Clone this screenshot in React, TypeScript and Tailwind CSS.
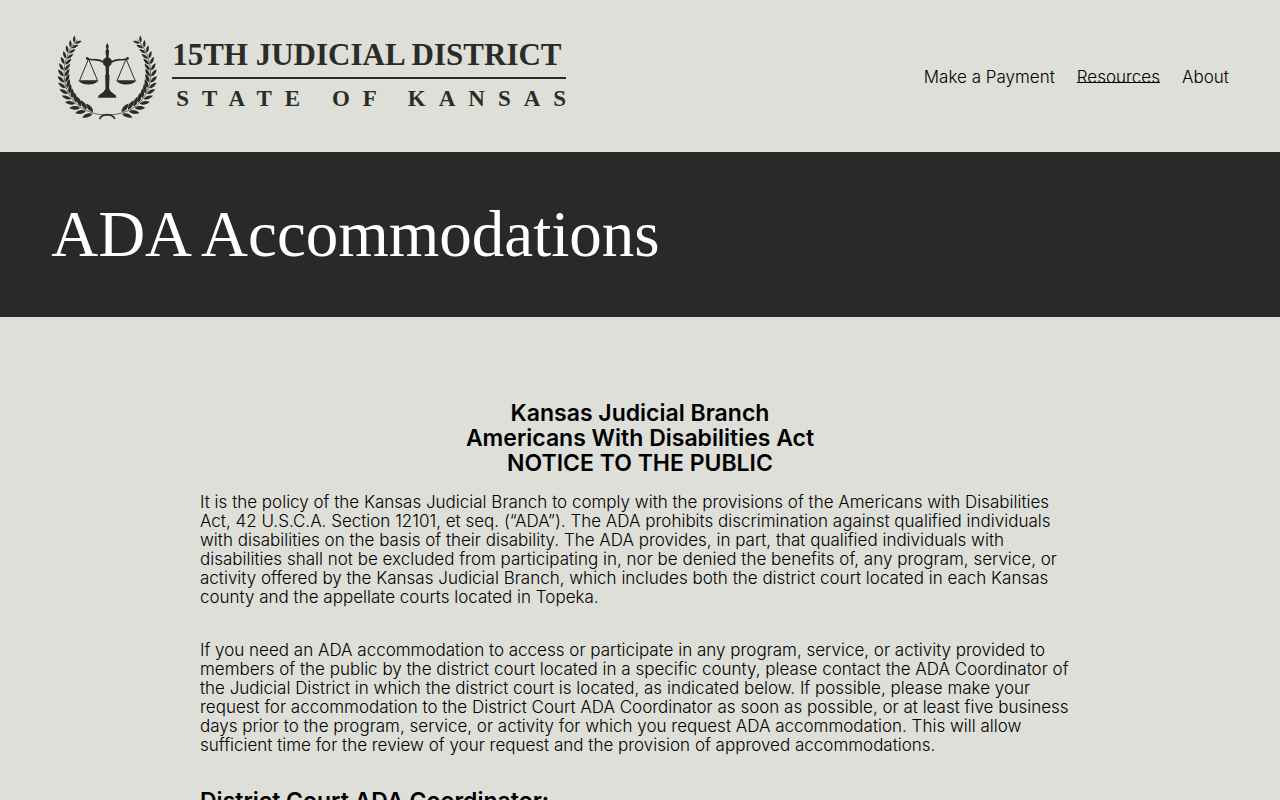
const navLinks = [
  { label: "Make a Payment", href: "#payment", active: false },
  { label: "Resources", href: "#resources", active: true },
  { label: "About", href: "#about", active: false },
];

// Stem of the left laurel branch, bottom to top
const stem = [
  [196, 287],
  [52, 280],
  [44, 128],
  [110, 60],
];

function stemPoint(t: number) {
  const u = 1 - t;
  const at = (i: number) =>
    u * u * u * stem[0][i] + 3 * u * u * t * stem[1][i] + 3 * u * t * t * stem[2][i] + t * t * t * stem[3][i];
  const slope = (i: number) =>
    3 * u * u * (stem[1][i] - stem[0][i]) + 6 * u * t * (stem[2][i] - stem[1][i]) + 3 * t * t * (stem[3][i] - stem[2][i]);
  return { x: at(0), y: at(1), angle: (Math.atan2(slope(1), slope(0)) * 180) / Math.PI };
}

const leaves = Array.from({ length: 15 }, (_, i) => ({ ...stemPoint(0.1 + i * 0.061), size: 1.25 - i * 0.032 }));

function Branch() {
  return (
    <g>
      <path d="M196 287C52 280 44 128 110 60" fill="none" stroke="currentColor" strokeWidth="2" />
      {leaves.map((leaf, i) => (
        <g key={i} transform={`translate(${leaf.x} ${leaf.y}) rotate(${leaf.angle}) scale(${leaf.size})`}>
          <path d="M1 -2C6-9 16-11 27-7C20 1 9 3 1-2Z" transform="rotate(-24)" />
          <path d="M1 2C6 9 16 11 27 7C20-1 9-3 1 2Z" transform="rotate(24)" />
        </g>
      ))}
    </g>
  );
}

function Emblem() {
  return (
    <svg viewBox="50 40 302 265" className="h-[88px] w-[101px] shrink-0" fill="currentColor" aria-hidden="true">
      <Branch />
      <g transform="translate(401 0) scale(-1 1)">
        <Branch />
      </g>
      <path d="M177 299Q183 287 200 286Q218 287 223 299M186 287H216" fill="none" stroke="currentColor" strokeWidth="5" />

      {/* Scales */}
      <path d="M200 69L205 80L203 88L206 94L204 113L213 120V134L206 141L205 163L207 169L206 208L211 216L227 229V235H173V229L190 216L195 208L194 169L196 163L195 141L188 134V120L197 113L195 94L198 88L196 80Z" />
      <path
        d="M138 117Q149 122 163 120Q179 121 190 128Q201 133 211 128Q223 120 238 120Q252 122 263 117"
        fill="none"
        stroke="currentColor"
        strokeWidth="5"
      />
      <circle cx="140" cy="116" r="4" />
      <circle cx="261" cy="116" r="4" />
      <path d="M144 118L117 183M144 118L171 183M257 118L230 183M257 118L284 183" fill="none" stroke="currentColor" strokeWidth="3" />
      <path d="M113 182H174Q165 195 144 195Q122 195 113 182ZM227 182H288Q279 195 257 195Q236 195 227 182Z" />
    </svg>
  );
}

function Logo() {
  return (
    <a href="#home" className="flex items-start gap-[14px] pl-[6px] text-[#2b2c27]">
      <Emblem />
      <span className="flex flex-col pt-1 font-['Liberation_Serif',serif] font-bold whitespace-nowrap">
        <span className="text-[31px] leading-9">15TH JUDICIAL DISTRICT</span>
        <span className="mt-1 h-[2px] bg-current" />
        <span className="-mr-[13px] mt-2 pl-1 text-[23px] leading-6 tracking-[13px]">STATE OF KANSAS</span>
      </span>
    </a>
  );
}

export default function App() {
  return (
    <div className="min-h-screen bg-[#dedfd9] font-['Inter',sans-serif] text-black">
      <header className="flex flex-wrap items-center justify-between gap-6 px-[4vw] pt-[33px] pb-[31px]">
        <Logo />
        <nav className="flex gap-[22px]">
          {navLinks.map((link) => (
            <a
              key={link.label}
              href={link.href}
              className={
                link.active
                  ? "text-[17px] leading-6 font-light underline decoration-1 underline-offset-[-1px] [text-decoration-skip-ink:none]"
                  : "text-[17px] leading-6 font-light"
              }
            >
              {link.label}
            </a>
          ))}
        </nav>
      </header>

      <section className="bg-[#2b2829] px-[4vw] py-12">
        <h1 className="font-['Liberation_Serif',serif] text-[65px] leading-[69px] text-white">ADA Accommodations</h1>
      </section>

      <main className="mx-auto max-w-[880px] pt-[84px] pb-16">
        <h2 className="text-center text-[23px] leading-[25px] font-semibold">
          Kansas Judicial Branch
          <br />
          Americans With Disabilities Act
          <br />
          NOTICE TO THE PUBLIC
        </h2>
        <p className="mt-[17px] text-[17px] leading-[19px] font-light">
          It is the policy of the Kansas Judicial Branch to comply with the provisions of the Americans with Disabilities
          Act, 42 U.S.C.A. Section 12101, et seq. (“ADA”). The ADA prohibits discrimination against qualified individuals
          with disabilities on the basis of their disability. The ADA provides, in part, that qualified individuals with
          disabilities shall not be excluded from participating in, nor be denied the benefits of, any program, service, or
          activity offered by the Kansas Judicial Branch, which includes both the district court located in each Kansas
          county and the appellate courts located in Topeka.
        </p>
        <p className="mt-[34px] text-[17px] leading-[19px] font-light">
          If you need an ADA accommodation to access or participate in any program, service, or activity provided to
          members of the public by the district court located in a specific county, please contact the ADA Coordinator of
          the Judicial District in which the district court is located, as indicated below. If possible, please make your
          request for accommodation to the District Court ADA Coordinator as soon as possible, or at least five business
          days prior to the program, service, or activity for which you request ADA accommodation. This will allow
          sufficient time for the review of your request and the provision of approved accommodations.
        </p>
        <h2 className="mt-[34px] text-[23px] leading-[25px] font-semibold">District Court ADA Coordinator:</h2>
      </main>
    </div>
  );
}
